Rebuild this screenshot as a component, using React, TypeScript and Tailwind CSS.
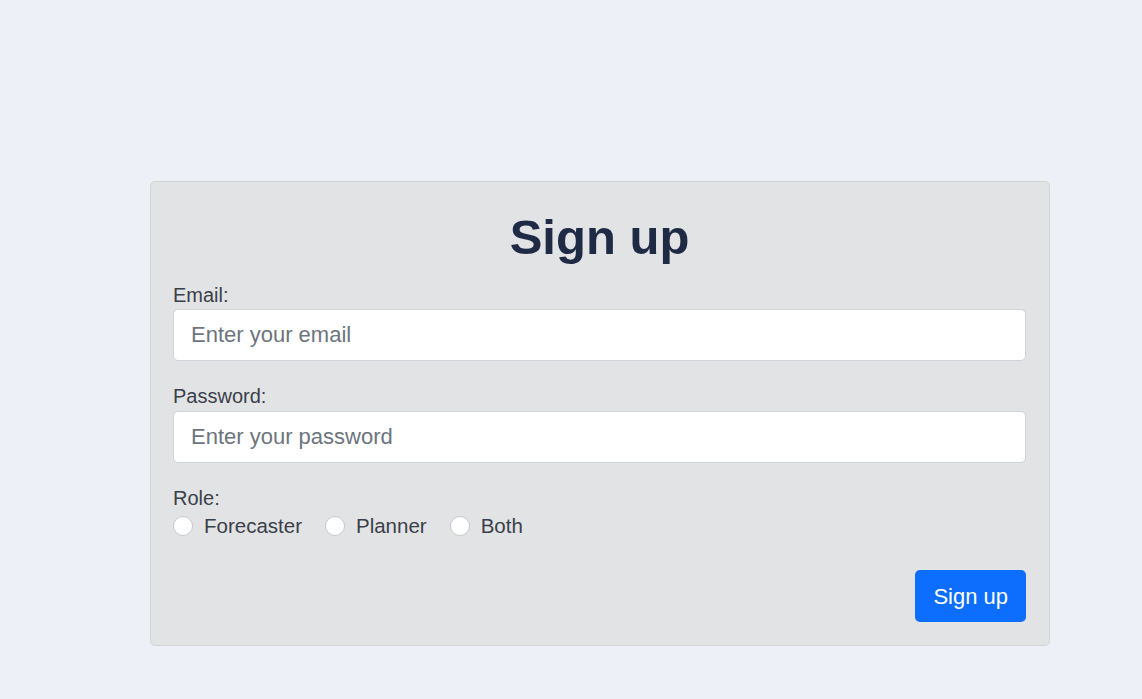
import { useState } from "react"

const roles = ["Forecaster", "Planner", "Both"]

export default function App() {
  const [role, setRole] = useState("")

  return (
    <div className="min-h-screen w-full bg-[#edf0f7] font-['Liberation_Sans',Arial,sans-serif] text-[#3a4049]">
      <div className="pt-[181px] pl-[150px]">
        <form
          className="w-[900px] rounded-[5px] border border-[#d3d4d6] bg-[#e2e3e5] pl-[22px] pr-[23px] pt-[26px] pb-[23px]"
          onSubmit={(e) => e.preventDefault()}
        >
          <h1 className="text-center text-[49px] leading-[58px] font-bold text-[#1f2a45]">Sign up</h1>

          <div className="mt-[17px] flex flex-col">
            <label className="mb-[2px] text-[20px] leading-[24px]">Email:</label>
            <input
              type="email"
              placeholder="Enter your email"
              className="h-[52px] w-full rounded-[5px] border border-[#ced4da] bg-white px-[17px] text-[22px] text-[#212529] outline-none placeholder:text-[#6c757d]"
            />
          </div>

          <div className="mt-[23px] flex flex-col">
            <label className="mb-[3px] text-[20px] leading-[24px]">Password:</label>
            <input
              type="password"
              placeholder="Enter your password"
              className="h-[52px] w-full rounded-[5px] border border-[#ced4da] bg-white px-[17px] text-[22px] text-[#212529] outline-none placeholder:text-[#6c757d]"
            />
          </div>

          <div className="mt-[23px]">
            <div className="text-[20px] leading-[24px]">Role:</div>
            <div className="mt-[2px] flex items-center gap-[23px]">
              {roles.map((r) => (
                <label key={r} className="flex items-center gap-[11px] text-[20.5px] leading-[28px]">
                  <input
                    type="radio"
                    name="role"
                    checked={role === r}
                    onChange={() => setRole(r)}
                    className="h-[20px] w-[20px] appearance-none rounded-full border border-[#c4c8cc] bg-white checked:border-[6px] checked:border-[#0d6efd]"
                  />
                  <span>{r}</span>
                </label>
              ))}
            </div>
          </div>

          <div className="mt-[30px] flex justify-end">
            <button
              type="submit"
              className="h-[52px] rounded-[5px] bg-[#0d6efd] px-[18px] text-[22px] text-white"
            >
              Sign up
            </button>
          </div>
        </form>
      </div>
    </div>
  )
}
